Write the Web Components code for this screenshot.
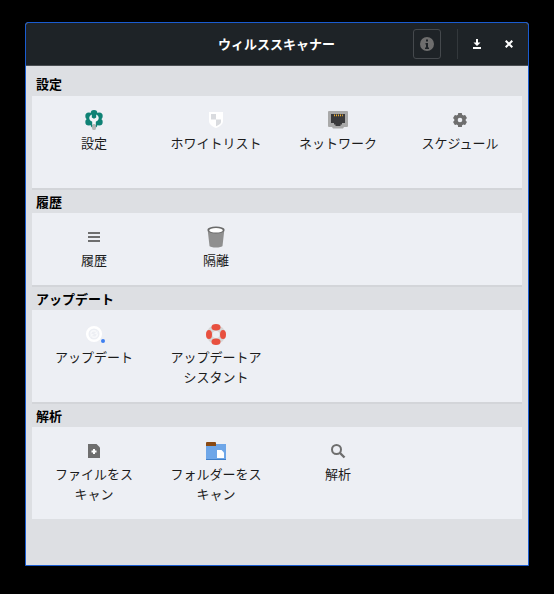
<!DOCTYPE html>
<html lang="ja"><head><meta charset="utf-8">
<style>
html,body{margin:0;background:#000;width:554px;height:594px;overflow:hidden}
body{padding:22px 0 0 25px;box-sizing:border-box;font-family:"Noto Sans CJK JP","Liberation Sans",sans-serif}
</style></head><body>
<scanner-window heading="ウィルススキャナー">
  <scan-section label="設定" height="92" first>
    <scan-item icon="settings">設定</scan-item>
    <scan-item icon="shield">ホワイトリスト</scan-item>
    <scan-item icon="network">ネットワーク</scan-item>
    <scan-item icon="gear">スケジュール</scan-item>
  </scan-section>
  <scan-section label="履歴" height="72">
    <scan-item icon="list">履歴</scan-item>
    <scan-item icon="trash">隔離</scan-item>
  </scan-section>
  <scan-section label="アップデート" height="92">
    <scan-item icon="update">アップデート</scan-item>
    <scan-item icon="help">アップデートアシスタント</scan-item>
  </scan-section>
  <scan-section label="解析" height="92" last>
    <scan-item icon="fileadd">ファイルをスキャン</scan-item>
    <scan-item icon="folder">フォルダーをスキャン</scan-item>
    <scan-item icon="search">解析</scan-item>
  </scan-section>
</scanner-window>
<script>
const BG='#edeff4';
const ICONS={
settings:`<svg width="20" height="20" viewBox="0 0 20 20"><g fill="#0f8275"><circle cx="10" cy="9" r="6.500"/><circle cx="10" cy="3.400" r="3.400"/><circle cx="4.800" cy="6" r="3.500"/><circle cx="15.200" cy="6" r="3.500"/><circle cx="4.800" cy="12" r="3.500"/><circle cx="15.200" cy="12" r="3.500"/><circle cx="10" cy="14.600" r="3.400"/></g><path fill="#f4f5f8" d="M7.800 4.400C6 5.200 5 6.800 5.300 8.600c.3 1.500 1.300 2.600 2.900 3.100V15h3.600v-3.300c1.600-.5 2.600-1.600 2.900-3.100.3-1.800-.7-3.400-2.500-4.200v3.200L10 8.800 7.800 7.600z"/><rect x="8.100" y="14" width="3.800" height="6" rx="1.500" fill="#b5b5b5"/></svg>`,
shield:`<svg width="16" height="18" viewBox="0 0 16 18"><path fill="#fff" d="M1 1h14v9c0 3-3 5.500-7 7-4-1.500-7-4-7-7z"/><path fill="#d9dbdf" d="M3 3h5v5.500H3zM8 8.500h5V11c0 1.500-2 3.200-5 4.300z"/></svg>`,
network:`<svg width="20" height="18" viewBox="0 0 20 18"><path fill="#a9a9a9" d="M1 0h18a1 1 0 0 1 1 1v14a1 1 0 0 1-1 1h-3l-1 1.500H5L4 16H1a1 1 0 0 1-1-1V1a1 1 0 0 1 1-1z"/><path fill="#3a3a3c" d="M3 3h14v9h-3v1.500h-1.500V15h-5v-1.500H6V12H3z"/><path fill="#f0b030" d="M6 3.500h1v1.800H6zM8 3.500h1v1.800H8zM10 3.500h1v1.800h-1zM12 3.500h1v1.800h-1zM14 3.500h.8v1.800H14z"/></svg>`,
gear:`<svg width="16" height="16" viewBox="0 0 16 16"><g fill="#6e6e6e"><circle cx="8" cy="8" r="5.800"/><rect x="6" y="1" width="4" height="14" rx=".5"/><rect x="6" y="1" width="4" height="14" rx=".5" transform="rotate(60 8 8)"/><rect x="6" y="1" width="4" height="14" rx=".5" transform="rotate(120 8 8)"/></g><circle cx="8" cy="8" r="2.300" fill="${BG}"/></svg>`,
list:`<svg width="16" height="16" viewBox="0 0 16 16"><path fill="#6e6e6e" d="M2 3h12v2H2zM2 7h12v2H2zM2 11h12v2H2z"/></svg>`,
trash:`<svg width="20" height="22" viewBox="0 0 20 22"><path fill="#8f8f8f" d="M1.800 5h16.400l-1.700 15c-.1.900-3.500 1.500-6.500 1.500s-6.400-.6-6.500-1.500z"/><ellipse cx="10" cy="4" rx="8.700" ry="3.400" fill="#6a6a6a"/><ellipse cx="10" cy="4.300" rx="6.800" ry="2.300" fill="#fff"/></svg>`,
update:`<svg width="22" height="22" viewBox="0 0 22 22"><circle cx="11" cy="11" r="6.800" fill="none" stroke="#fff" stroke-width="2.500"/><circle cx="11" cy="11" r="3.300" fill="none" stroke="#f8f9fb" stroke-width="1.500" stroke-dasharray="7 3.300"/><path fill="#f8f9fb" d="M14.500 7.500v3.500H11zM7.500 14.500V11H11z"/><circle cx="20" cy="18" r="2" fill="#3d7ff0"/></svg>`,
help:`<svg width="20" height="21" viewBox="0 0 20 21"><circle cx="10" cy="10.500" r="6.500" fill="none" stroke="#d6d6d6" stroke-width="6"/><g fill="#e8503f"><ellipse cx="10" cy="3.200" rx="4.500" ry="3.200"/><ellipse cx="10" cy="17.800" rx="4.500" ry="3.200"/><ellipse cx="3" cy="10.500" rx="3" ry="4.500"/><ellipse cx="17" cy="10.500" rx="3" ry="4.500"/></g></svg>`,
fileadd:`<svg width="16" height="16" viewBox="0 0 16 16"><path fill="#6e6e6e" d="M2 1h8.500L14 4.500V15H2z"/><path fill="#fff" d="M7 5.500h2V7h1.500v2H9v1.500H7V9H5.500V7H7z" transform="translate(0 .5)"/></svg>`,
folder:`<svg width="20" height="18" viewBox="0 0 20 18"><path fill="#6ea6e8" d="M0 2h20v16H0z"/><path fill="#8a4a14" d="M0 1a1 1 0 0 1 1-1h8a1 1 0 0 1 1 1v3H0z"/><path fill="#3f7fc9" d="M0 17h20v1H0z"/><path fill="#fff" d="M11 8h4.500L18 10.500V16h-7z"/></svg>`,
search:`<svg width="16" height="16" viewBox="0 0 16 16"><circle cx="6.500" cy="6.500" r="4.500" fill="none" stroke="#6e6e6e" stroke-width="2"/><path d="M10 10l4.500 4.500" stroke="#6e6e6e" stroke-width="2.400"/></svg>`
};
class ScannerWindow extends HTMLElement{
  constructor(){super();const r=this.attachShadow({mode:'open'});
  r.innerHTML=`<style>
  :host{display:flex;flex-direction:column;width:504px;height:544px;box-sizing:border-box;border:1px solid #1a5cd0;border-radius:3px 3px 0 0;background:#dddfe3;color:#000}
  header{display:flex;align-items:center;height:42px;background:#1e2327;padding:0 9px 0 0;position:relative;flex:none;border-bottom:1px solid #4a4e52;border-radius:2px 2px 0 0;box-sizing:content-box}
  h1{position:absolute;left:0;right:1px;text-align:center;margin:0;font-size:13px;font-weight:700;color:#fff;line-height:42px}
  .tools{margin-left:auto;display:flex;align-items:center;position:relative}
  .info{width:28px;height:30px;box-sizing:border-box;border:1px solid #45494d;border-radius:3px;display:flex;align-items:center;justify-content:center}
  .sep{width:1px;height:30px;background:#33383c;margin:0 9px 0 16px}
  .b{width:20px;height:20px;display:flex;align-items:center;justify-content:center}
  .b+.b{margin-left:12px}
  main{flex:1;padding:6px 6px 0;display:flex;flex-direction:column}
  svg{display:block}
  </style>
  <header><h1></h1><div class="tools">
  <div class="info"><svg width="14" height="14" viewBox="0 0 14 14"><circle cx="7" cy="7" r="7" fill="#6e6e6e"/><path fill="#1e2327" d="M6 2.500h2v2H6zM5.500 6H8v4.500h1V12H5v-1.500h1v-3h-.5z"/></svg></div>
  <div class="sep"></div>
  <div class="b"><svg width="8" height="10" viewBox="0 0 8 10"><path fill="#fff" d="M3 0h2v3.500h2.500L4 7 .5 3.500H3zM0 8h8v2H0z"/></svg></div>
  <div class="b"><svg width="8" height="8" viewBox="0 0 8 8"><path stroke="#fff" stroke-width="2" d="M.7.700l6.600 6.600M7.300.700L.7 7.300"/></svg></div>
  </div></header><main><slot></slot></main>`;
  r.querySelector('h1').textContent=this.getAttribute('heading');}
}
class ScanSection extends HTMLElement{
  constructor(){super();const r=this.attachShadow({mode:'open'});
  r.innerHTML=`<style>
  :host{display:block;border-bottom:2px solid #d3d5d9}
  :host([last]){border-bottom:0}
  .l{height:23px;line-height:23px;font-size:13px;font-weight:700;padding-left:4px;color:#000}
  :host([first]) .l{height:24px}
  .p{display:grid;grid-template-columns:124px 120px 124px 120px;background:${BG}}
  </style><div class="l"></div><div class="p"><slot></slot></div>`;
  r.querySelector('.l').textContent=this.getAttribute('label');
  r.querySelector('.p').style.height=this.getAttribute('height')+'px';}
}
class ScanItem extends HTMLElement{
  constructor(){super();const r=this.attachShadow({mode:'open'});
  r.innerHTML=`<style>
  :host{display:flex;flex-direction:column;align-items:center;padding:0 13px;box-sizing:border-box;min-width:0}
  .i{height:28px;margin-top:10px;display:flex;align-items:center;justify-content:center;flex:none}
  .t{margin-top:-1px;font-size:13px;line-height:20px;text-align:center;color:#1c1c1c;line-break:strict;width:100%}
  svg{display:block}
  </style><div class="i"></div><div class="t"><slot></slot></div>`;
  r.querySelector('.i').innerHTML=ICONS[this.getAttribute('icon')];}
}
customElements.define('scanner-window',ScannerWindow);
customElements.define('scan-section',ScanSection);
customElements.define('scan-item',ScanItem);
</script>
</body></html>
